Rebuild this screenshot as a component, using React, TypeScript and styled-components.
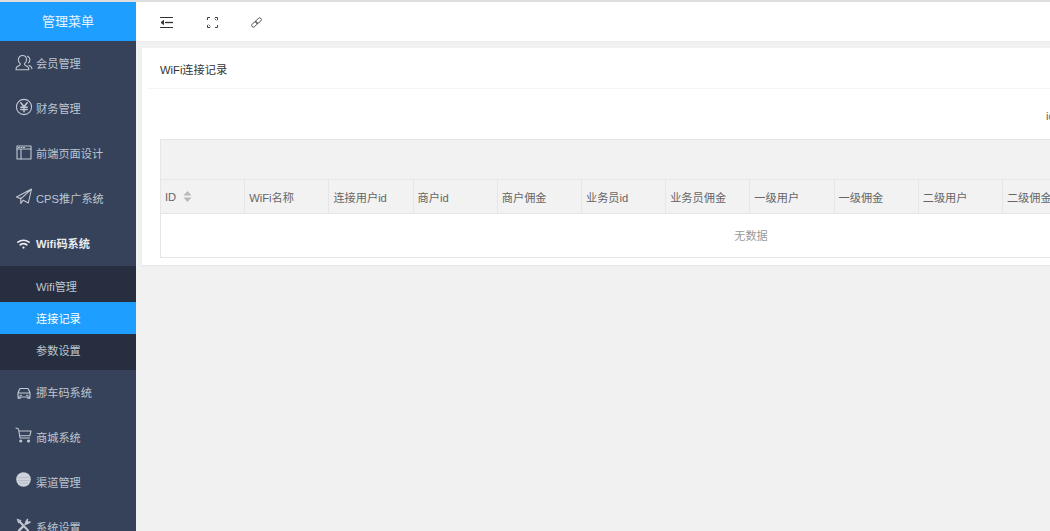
import { ReactNode } from "react";
import styled, { createGlobalStyle } from "styled-components";

const GlobalStyle = createGlobalStyle`
  html, body {
    margin: 0;
    padding: 0;
    height: 100%;
    background: #f1f1f1;
    font-family: "Liberation Sans", "Noto Sans CJK SC", sans-serif;
  }
`;

const Page = styled.div`
  width: 1050px;
  height: 531px;
  display: flex;
  flex-direction: column;
  overflow: hidden;
  border-top: 2px solid #dedede;
  box-sizing: border-box;
`;

const Body = styled.div`
  flex: 1;
  display: flex;
  min-height: 0;
`;

const Sidebar = styled.aside`
  width: 136px;
  flex: none;
  background: #35425a;
  overflow: hidden;
`;

const Brand = styled.div`
  height: 39px;
  background: #1e9fff;
  color: #e6f4ff;
  font-size: 13px;
  line-height: 39px;
  text-align: center;
`;

const NavItem = styled.div<{ $open?: boolean }>`
  height: 45px;
  box-sizing: border-box;
  display: flex;
  align-items: center;
  padding: 0 0 2px 14px;
  gap: 3px;
  color: ${(p) => (p.$open ? "#e9ebef" : "#bfc5cf")};
  font-size: 11.2px;
  font-weight: ${(p) => (p.$open ? 700 : 400)};
`;

const NavIcon = styled.span<{ $shift?: number }>`
  width: 19px;
  height: 20px;
  flex: none;
  display: flex;
  align-items: center;
  justify-content: center;
  margin-top: ${(p) => (p.$shift ?? 0) * 2}px;
  svg {
    display: block;
  }
`;

const SubMenu = styled.div`
  background: #262e3f;
  padding: 4px 0;
`;

const SubItem = styled.div<{ $active?: boolean }>`
  height: 32px;
  line-height: 34px;
  padding-left: 36px;
  font-size: 11.2px;
  color: ${(p) => (p.$active ? "#ffffff" : "#bfc5cf")};
  background: ${(p) => (p.$active ? "#1e9fff" : "transparent")};
`;

const Main = styled.main`
  flex: 1;
  min-width: 0;
  overflow: hidden;
`;

const TopBar = styled.div`
  height: 39px;
  box-sizing: content-box;
  background: #fff;
  border-bottom: 1px solid #ececec;
  display: flex;
  align-items: center;
  padding-left: 24px;
  svg {
    display: block;
  }
`;

const TopButton = styled.span<{ $width: number }>`
  width: ${(p) => p.$width}px;
  flex: none;
  display: flex;
  padding-top: 1px;
`;

const Content = styled.div`
  padding: 6px;
  width: 1212px;
`;

const Card = styled.section`
  background: #fff;
  box-shadow: 0 1px 2px rgba(0, 0, 0, 0.05);
  height: 217px;
`;

const CardTitle = styled.div`
  height: 40px;
  line-height: 45px;
  margin-left: 6px;
  padding-left: 12px;
  border-bottom: 1px solid #f6f6f6;
  font-size: 11.2px;
  color: #333;
`;

const CardBody = styled.div`
  padding: 0 12px 0 18px;
`;

const SearchRow = styled.div`
  height: 50px;
  line-height: 54px;
  padding-left: 886px;
  font-size: 11.2px;
  color: #666;
`;

const Toolbar = styled.div`
  height: 39px;
  background: #f2f2f2;
  border: 1px solid #e6e6e6;
  border-bottom: 0;
`;

const Table = styled.table`
  width: 1182px;
  table-layout: fixed;
  border-collapse: collapse;
  font-size: 11.2px;
  color: #666;
  border: 1px solid #e6e6e6;
`;

const HeadCell = styled.th`
  height: 34px;
  padding: 0 0 0 4px;
  box-sizing: border-box;
  background: #f2f2f2;
  border: 1px solid #e6e6e6;
  text-align: left;
  font-weight: 400;
  white-space: nowrap;
  overflow: hidden;
`;

const EmptyCell = styled.td`
  height: 44px;
  padding: 0 0 2px;
  box-sizing: border-box;
  text-align: center;
  color: #999;
  border: 1px solid #e6e6e6;
`;

const SortCaret = styled.span`
  display: inline-block;
  vertical-align: -1px;
  margin-left: 7px;
  svg {
    display: block;
  }
`;

const columns = [
  "ID",
  "WiFi名称",
  "连接用户id",
  "商户id",
  "商户佣金",
  "业务员id",
  "业务员佣金",
  "一级用户",
  "一级佣金",
  "二级用户",
  "二级佣金",
];

const stroke = {
  fill: "none",
  stroke: "#c3c8d2",
  strokeWidth: 1.1,
  strokeLinecap: "round" as const,
  strokeLinejoin: "round" as const,
};

const UserIcon = () => (
  <svg width="18" height="18" viewBox="0 0 18 18" {...stroke}>
    <path d="M7.500 1.500c2.500 0 4 2 4 4.300 0 1.700-.8 3.100-2 3.900-.2 1 0 1.500 1 1.900l2 1c1 .5 1.300 1.500 1.300 3.200H1c0-1.700.3-2.700 1.300-3.200l2-1c1-.4 1.200-.9 1-1.900-1.200-.8-2-2.200-2-3.900 0-2.300 1.700-4.300 4.200-4.300z" />
    <path d="M12.500 2.200c1.600.6 2.400 2 2.400 3.500 0 1.300-.6 2.500-1.500 3.200" />
    <path d="M14 11.500l1.500.8c.9.500 1.300 1.200 1.400 2.500" />
  </svg>
);

const YenIcon = () => (
  <svg width="18" height="18" viewBox="0 0 18 18" {...stroke}>
    <circle cx="9" cy="9" r="7.600" />
    <path strokeWidth="1.500" d="M5.800 4.800 9 8.800l3.200-4M5.800 9.300h6.400M5.800 11.500h6.400M9 8.800v5" />
  </svg>
);

const LayoutIcon = () => (
  <svg width="16" height="15" viewBox="0 0 16 15" {...stroke}>
    <rect x="1" y="1" width="14" height="13" />
    <path d="M1 4h14M5 4v10" />
    <path d="M2.500 2.500h1M5 2.500h1M7.500 2.500h1" />
  </svg>
);

const PlaneIcon = () => (
  <svg width="18" height="17" viewBox="0 0 18 17" {...stroke}>
    <path d="M16.500 1 1.500 9l4.300 1.800L16.500 1l-3.200 14-5-2.800-2.500 3.300v-5.700" />
  </svg>
);

const WifiIcon = () => (
  <svg width="13" height="10" viewBox="0 0 13 10" fill="none" stroke="#eef0f3" strokeWidth="1.700" strokeLinecap="round">
    <path d="M1 3.200c3.200-2.600 7.800-2.600 11 0M3.300 5.800c2-1.500 4.400-1.500 6.400 0" />
    <circle cx="6.500" cy="8.600" r="1.100" fill="#eef0f3" stroke="none" />
  </svg>
);

const CarIcon = () => (
  <svg width="14" height="12" viewBox="0 0 14 12" {...stroke}>
    <path d="M1 6l1.500-3.700c.2-.5.500-.8 1-.8h7c.5 0 .8.300 1 .8L13 6M1 6h12v4H1zM1.200 10v1.200h2V10M10.800 10v1.200h2V10M3 8.200h1.500M9.500 8.200H11" />
  </svg>
);

const CartIcon = () => (
  <svg width="17" height="16" viewBox="0 0 17 16" {...stroke}>
    <path d="M1 1l2.500 1L5 11h9.500M4 4h12l-1.200 4.800H5" />
    <circle cx="5.800" cy="14" r="1" fill="#c3c8d2" />
    <circle cx="13.500" cy="14" r="1" fill="#c3c8d2" />
  </svg>
);

const ChannelIcon = () => (
  <svg width="15" height="15" viewBox="0 0 15 15">
    <circle cx="7.500" cy="7.500" r="7.300" fill="#cdd2db" />
    <path d="M2 5.500h11M1.500 8.500h12M3 11h9" stroke="#b3bac7" strokeWidth="0.800" />
  </svg>
);

const ToolsIcon = () => (
  <svg width="15" height="15" viewBox="0 0 15 15" fill="none" stroke="#c3c8d2" strokeLinecap="round">
    <path strokeWidth="2.400" d="M3 12.500 7.500 8M9.500 6l2-2" />
    <path strokeWidth="1.500" d="M11.500 1.500 10 4l1.500 1.500L14 4" />
    <path strokeWidth="2" d="M3.500 3.500 12 12.500" />
    <path strokeWidth="1.200" d="M1.500 1.500l3 1-2 2z" />
  </svg>
);

const OutdentIcon = () => (
  <svg width="13" height="11" viewBox="0 0 13 11" fill="none" stroke="#333" strokeWidth="1">
    <path d="M0 .5h13M0 10.500h13" />
    <path strokeWidth="1.300" d="M5 5.500h8" />
    <path d="M3.500 3.500 1 5.500l2.500 2z" fill="#333" />
  </svg>
);

const FullscreenIcon = () => (
  <svg width="11" height="11" viewBox="0 0 11 11" fill="none" stroke="#444" strokeWidth="1">
    <path d="M.5 3v-2.500H3M8 .5h2.500V3M10.500 8v2.500H8M3 10.500H.5V8" />
    <path d="M7.500 1.500l2 2M3.500 9.500l-2-2" strokeWidth="0.800" />
  </svg>
);

const LinkIcon = () => (
  <svg width="11" height="11" viewBox="0 0 11 11" fill="none" stroke="#444" strokeWidth="0.900">
    <rect x="0.200" y="5.600" width="6.600" height="3.400" rx="1.700" transform="rotate(-45 3.500 7.300)" />
    <rect x="4.200" y="2" width="6.600" height="3.400" rx="1.700" transform="rotate(-45 7.500 3.700)" />
  </svg>
);

const SortIcon = () => (
  <svg width="9" height="11" viewBox="0 0 9 11" fill="#b9b9b9">
    <path d="M4.500 0 8.500 4.500h-8zM4.500 11 .5 6.500h8z" />
  </svg>
);

const topMenu: { label: string; icon: ReactNode; shift?: number; open?: boolean }[] = [
  { label: "会员管理", icon: <UserIcon /> },
  { label: "财务管理", icon: <YenIcon />, shift: -0.5 },
  { label: "前端页面设计", icon: <LayoutIcon /> },
  { label: "CPS推广系统", icon: <PlaneIcon />, shift: -1 },
  { label: "Wifi码系统", icon: <WifiIcon />, shift: 1, open: true },
];

const bottomMenu: { label: string; icon: ReactNode; shift?: number }[] = [
  { label: "挪车码系统", icon: <CarIcon />, shift: 1 },
  { label: "商城系统", icon: <CartIcon />, shift: -1.5 },
  { label: "渠道管理", icon: <ChannelIcon />, shift: -2 },
  { label: "系统设置", icon: <ToolsIcon />, shift: -1 },
];

const App = () => {
  return (
    <>
      <GlobalStyle />
      <Page>
        <Body>
          <Sidebar>
            <Brand>管理菜单</Brand>
            {topMenu.map((item) => (
              <NavItem key={item.label} $open={item.open}>
                <NavIcon $shift={item.shift}>{item.icon}</NavIcon>
                {item.label}
              </NavItem>
            ))}
            <SubMenu>
              <SubItem>Wifi管理</SubItem>
              <SubItem $active>连接记录</SubItem>
              <SubItem>参数设置</SubItem>
            </SubMenu>
            {bottomMenu.map((item) => (
              <NavItem key={item.label}>
                <NavIcon $shift={item.shift}>{item.icon}</NavIcon>
                {item.label}
              </NavItem>
            ))}
          </Sidebar>
          <Main>
            <TopBar>
              <TopButton $width={47}>
                <OutdentIcon />
              </TopButton>
              <TopButton $width={44}>
                <FullscreenIcon />
              </TopButton>
              <TopButton $width={44}>
                <LinkIcon />
              </TopButton>
            </TopBar>
            <Content>
              <Card>
                <CardTitle>WiFi连接记录</CardTitle>
                <CardBody>
                  <SearchRow>id</SearchRow>
                  <Toolbar />
                  <Table>
                    <colgroup>
                      {columns.map((name) => (
                        <col key={name} width={84.2} />
                      ))}
                      <col />
                    </colgroup>
                    <thead>
                      <tr>
                        {columns.map((name) => (
                          <HeadCell key={name}>
                            {name}
                            {name === "ID" && (
                              <SortCaret>
                                <SortIcon />
                              </SortCaret>
                            )}
                          </HeadCell>
                        ))}
                        <HeadCell />
                      </tr>
                    </thead>
                    <tbody>
                      <tr>
                        <EmptyCell colSpan={columns.length + 1}>无数据</EmptyCell>
                      </tr>
                    </tbody>
                  </Table>
                </CardBody>
              </Card>
            </Content>
          </Main>
        </Body>
      </Page>
    </>
  );
};

export default App;
